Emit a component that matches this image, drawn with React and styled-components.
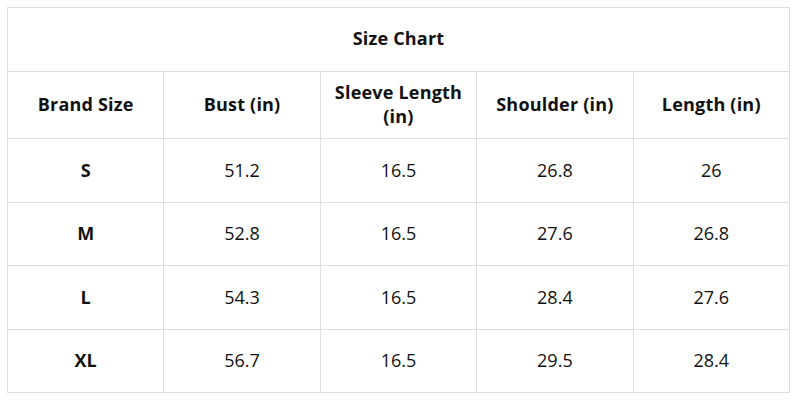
import React from 'react'
import styled, { createGlobalStyle } from 'styled-components'

const Global = createGlobalStyle`
  body {
    margin: 0;
    background: #fff;
    font-family: "Open Sans", "Liberation Sans", sans-serif;
    color: #111;
  }
`

const Page = styled.div`
  padding: 7px 0 0 7px;
`

const Table = styled.table`
  width: 783px;
  border-collapse: collapse;
  table-layout: fixed;
  text-align: center;

  td, th {
    border: 1px solid #dcdfdf;
    padding: 0 6px;
  }
`

const Title = styled.th`
  height: 60px;
  padding-bottom: 3px !important;
  font-size: 18px;
  font-weight: 700;
  letter-spacing: 0.2px;
`

const Head = styled.th`
  height: 63px;
  padding-bottom: 3px !important;
  font-size: 18px;
  font-weight: 700;
  line-height: 24px;
  letter-spacing: 0.2px;
`

const Cell = styled.td`
  height: 61.5px;
  padding-bottom: 1px !important;
  font-size: 18px;
  font-weight: ${({ $bold }) => ($bold ? 700 : 400)};
`

const columns = ['Brand Size', 'Bust (in)', 'Sleeve Length (in)', 'Shoulder (in)', 'Length (in)']

const rows = [
  ['S', '51.2', '16.5', '26.8', '26'],
  ['M', '52.8', '16.5', '27.6', '26.8'],
  ['L', '54.3', '16.5', '28.4', '27.6'],
  ['XL', '56.7', '16.5', '29.5', '28.4'],
]

export default function App() {
  return (
    <Page>
      <Global />
      <Table>
        <thead>
          <tr>
            <Title colSpan={5}>Size Chart</Title>
          </tr>
          <tr>
            {columns.map((c) => (
              <Head key={c}>{c}</Head>
            ))}
          </tr>
        </thead>
        <tbody>
          {rows.map((r) => (
            <tr key={r[0]}>
              {r.map((v, i) => (
                <Cell key={i} $bold={i === 0}>{v}</Cell>
              ))}
            </tr>
          ))}
        </tbody>
      </Table>
    </Page>
  )
}
